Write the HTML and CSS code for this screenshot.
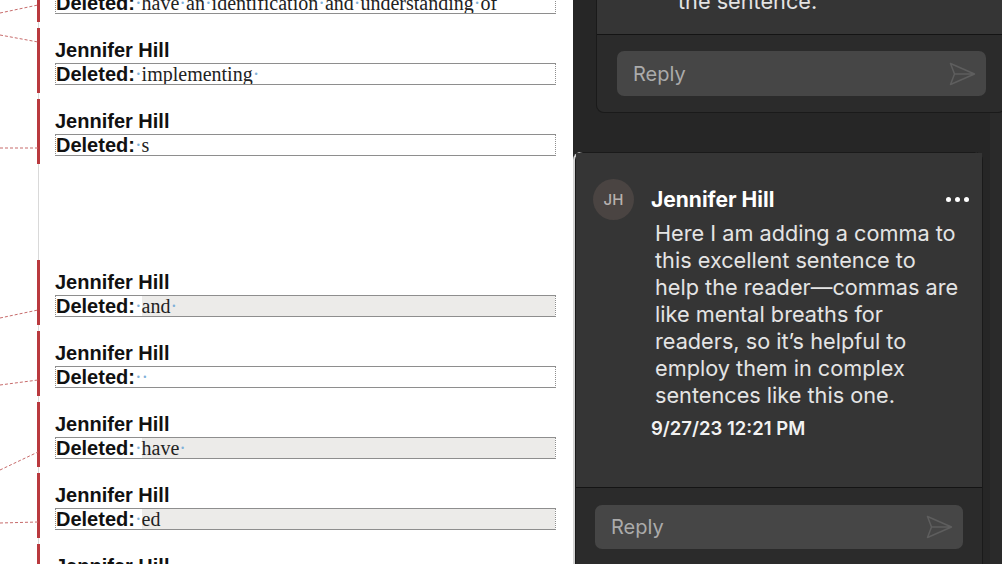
FILE: index.html
```html
<!DOCTYPE html>
<html lang="en">
<head>
<meta charset="utf-8">
<title>Track changes and comments</title>
<link rel="stylesheet" href="styles.css">
</head>
<body>
<div class="screen">
  <div class="doc">
    <svg class="connectors" width="40" height="564" viewBox="0 0 40 564" aria-hidden="true">
      <g stroke="#c76b6b" stroke-width="1" stroke-dasharray="3 2" fill="none">
        <line x1="0" y1="13" x2="38" y2="5"/>
        <line x1="0" y1="35" x2="38" y2="42"/>
        <line x1="0" y1="148" x2="38" y2="148"/>
        <line x1="0" y1="318" x2="38" y2="310"/>
        <line x1="0" y1="385" x2="38" y2="380"/>
        <line x1="0" y1="470" x2="38" y2="452"/>
        <line x1="0" y1="523" x2="38" y2="522"/>
      </g>
    </svg>
    <div class="rail">
      <div class="balloon">
        <div class="author">Jennifer Hill</div>
        <div class="change"><b class="label">Deleted:</b><span class="mk lead">·</span><span class="del">have<span class="mk">·</span>an<span class="mk">·</span>identification<span class="mk">·</span>and<span class="mk">·</span>understanding<span class="mk">·</span>of</span></div>
      </div>
      <div class="balloon">
        <div class="author">Jennifer Hill</div>
        <div class="change"><b class="label">Deleted:</b><span class="mk lead">·</span><span class="del">implementing<span class="mk">·</span></span></div>
      </div>
      <div class="balloon">
        <div class="author">Jennifer Hill</div>
        <div class="change"><b class="label">Deleted:</b><span class="mk lead">·</span><span class="del">s</span></div>
      </div>
      <div class="balloon after-gap">
        <div class="author">Jennifer Hill</div>
        <div class="change"><b class="label">Deleted:</b><span class="mk lead">·</span><span class="del fill">and<span class="mk">·</span></span></div>
      </div>
      <div class="balloon">
        <div class="author">Jennifer Hill</div>
        <div class="change"><b class="label">Deleted:</b><span class="mk lead">·</span><span class="del"><span class="mk">·</span></span></div>
      </div>
      <div class="balloon">
        <div class="author">Jennifer Hill</div>
        <div class="change"><b class="label">Deleted:</b><span class="mk lead">·</span><span class="del fill">have<span class="mk">·</span></span></div>
      </div>
      <div class="balloon">
        <div class="author">Jennifer Hill</div>
        <div class="change"><b class="label">Deleted:</b><span class="mk lead">·</span><span class="del fill">ed</span></div>
      </div>
      <div class="balloon">
        <div class="author">Jennifer Hill</div>
        <div class="change"><b class="label">Deleted:</b><span class="mk lead">·</span><span class="del">the</span></div>
      </div>
    </div>
  </div>

  <div class="pane">
    <div class="card card-prev">
      <div class="card-body prev-body">
        <p class="prev-text">the sentence.</p>
      </div>
      <div class="reply-area">
        <div class="reply-input">
          <span class="reply-ph">Reply</span>
          <svg class="send" width="27" height="24" viewBox="0 0 27 24" aria-hidden="true">
            <path d="M1.5 1.5 L25.5 12 L1.5 22.5 L5.5 12 Z M5.5 12 H25.5" fill="none" stroke="currentColor" stroke-width="1.5" stroke-linejoin="round"/>
          </svg>
        </div>
      </div>
    </div>

    <div class="card card-active">
      <div class="card-body active-body">
        <div class="avatar">JH</div>
        <div class="head">
          <span class="name">Jennifer Hill</span>
          <span class="more" aria-label="More"><i></i><i></i><i></i></span>
        </div>
        <div class="content">
          <p class="text">Here I am adding a comma to<br>this excellent sentence to<br>help the reader—commas are<br>like mental breaths for<br>readers, so it’s helpful to<br>employ them in complex<br>sentences like this one.</p>
          <div class="stamp">9/27/23 12:21 PM</div>
        </div>
      </div>
      <div class="reply-area active-reply">
        <div class="reply-input">
          <span class="reply-ph">Reply</span>
          <svg class="send" width="27" height="24" viewBox="0 0 27 24" aria-hidden="true">
            <path d="M1.5 1.5 L25.5 12 L1.5 22.5 L5.5 12 Z M5.5 12 H25.5" fill="none" stroke="currentColor" stroke-width="1.5" stroke-linejoin="round"/>
          </svg>
        </div>
      </div>
    </div>
  </div>
</div>
</body>
</html>
```

FILE: styles.css
```css
* { box-sizing: border-box; }
html, body { margin: 0; padding: 0; background: #262626; }
p { margin: 0; }

.screen {
  display: flex;
  width: 1002px;
  height: 564px;
  overflow: hidden;
}

/* ---------- Word document markup area ---------- */
.doc {
  position: relative;
  flex: none;
  width: 573px;
  height: 564px;
  background: #ffffff;
  overflow: hidden;
}

.connectors {
  position: absolute;
  left: 0;
  top: 0;
}

.rail {
  display: flex;
  flex-direction: column;
  gap: 6px;
  margin-left: 38px;
  margin-top: -43px;
  height: 660px;
  border-left: 1px solid #d9d9d9;
}

.balloon {
  margin-left: -2px;
  padding: 9px 0 8px 15px;
  border-left: 3px solid #b9393e;
}
.balloon.after-gap { margin-top: 90px; }

.author {
  font-family: "Liberation Sans", Arial, sans-serif;
  font-weight: 700;
  font-size: 20px;
  line-height: 26px;
  color: #111111;
  white-space: nowrap;
}

.change {
  display: flex;
  width: 501px;
  height: 22px;
  border-top: 1px solid #8e8e8e;
  border-bottom: 1px solid #8e8e8e;
  border-left: 1px dotted #8e8e8e;
  border-right: 1px dotted #8e8e8e;
  line-height: 20px;
  white-space: nowrap;
  overflow: hidden;
}

.label {
  font-family: "Liberation Sans", Arial, sans-serif;
  font-weight: 700;
  font-size: 20px;
  color: #111111;
}

.del {
  flex: 1;
  font-family: "Liberation Serif", "Times New Roman", serif;
  font-size: 20px;
  color: #222222;
}
.del.fill { background: #ecebe9; }

.mk {
  font-family: "Liberation Serif", "Times New Roman", serif;
  font-size: 20px;
  color: #7fb1d9;
}
.mk.lead { padding: 0; }

/* ---------- Comments pane ---------- */
.pane {
  flex: 1;
  display: flex;
  flex-direction: column;
  overflow: hidden;
  background: linear-gradient(to right, #262626 calc(100% - 12px), #2a2a2a 0);
  font-family: Inter, "Liberation Sans", sans-serif;
}

.card {
  flex: none;
  border: 1px solid #1a1a1a;
  background: #2b2b2b;
}

.card-prev {
  width: 410px;
  margin: -12px 0 0 23px;
  border-top: none;
  border-radius: 0 0 8px 8px;
}

.card-body {
  background: #353535;
  border-bottom: 1px solid #141414;
}

.prev-body { padding: 0 0 19px 81px; }

.prev-text,
.text {
  font-size: 21.7px;
  line-height: 27px;
  color: #e4e4e4;
}

.reply-area { padding: 16px 19px 16px 20px; }

.reply-input {
  display: flex;
  align-items: center;
  justify-content: space-between;
  height: 45px;
  padding: 0 10px 0 16px;
  border-radius: 7px;
  background: #464646;
}

.reply-ph {
  font-size: 20px;
  color: #ababab;
}

.send { color: #5e5e5e; }

.card-active {
  width: 408px;
  margin: 39px 0 0 2px;
  border-radius: 8px 8px 0 0;
  box-shadow: -2px 0 0 #d2d2d2;
}

.active-body {
  display: grid;
  grid-template-columns: 41px 1fr;
  column-gap: 17px;
  padding: 26px 13px 47px 17px;
}

.avatar {
  width: 41px;
  height: 41px;
  border-radius: 50%;
  background: #4a4442;
  color: #b7b1af;
  font-size: 15px;
  font-weight: 500;
  display: flex;
  align-items: center;
  justify-content: center;
}

.head {
  display: flex;
  align-items: center;
  justify-content: space-between;
  height: 41px;
}

.name {
  font-size: 21px;
  font-weight: 700;
  color: #ffffff;
}

.more {
  display: flex;
  gap: 4px;
}
.more i {
  display: block;
  width: 5px;
  height: 5px;
  border-radius: 50%;
  background: #ffffff;
}

.content { grid-column: 2; }

.text { padding-left: 4px; }

.stamp {
  margin-top: 7px;
  font-size: 18.5px;
  line-height: 24px;
  font-weight: 600;
  color: #f2f2f2;
}

.active-reply { padding: 17px 19px 20px 19px; }
.active-reply .reply-input { height: 44px; }
```
